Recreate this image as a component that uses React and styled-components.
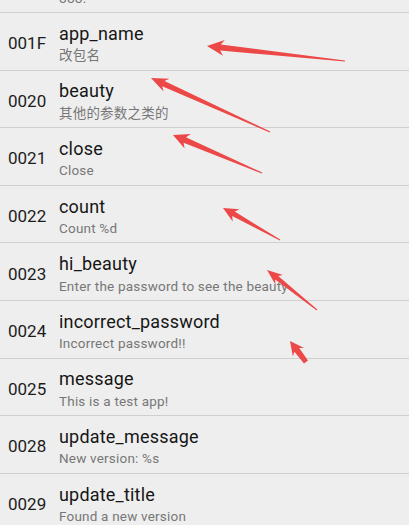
import React from 'react'
import styled, { createGlobalStyle } from 'styled-components'

const GlobalStyle = createGlobalStyle`
   html, body {
      margin: 0;
      padding: 0;
      background: #eeeeee;
      overflow: hidden;
   }
   body {
      font-family: Roboto, "Noto Sans CJK SC", sans-serif;
   }
`

const Screen = styled.div`
   position: relative;
   width: 409px;
   height: 525px;
   overflow: hidden;
   background: #eeeeee;
`

const List = styled.ul`
   list-style: none;
   margin: -44.6px 0 0 0;
   padding: 0;
`

const Row = styled.li`
   box-sizing: border-box;
   height: 57.6px;
   display: flex;
   align-items: flex-start;
   padding-left: 8px;
   border-bottom: 1px solid #cfcfcf;
`

const Code = styled.span`
   width: 51px;
   flex-shrink: 0;
   padding-top: 20.2px;
   font-size: 17px;
   line-height: 20px;
   color: #1c1c1c;
`

const Texts = styled.div`
   display: flex;
   flex-direction: column;
   min-width: 0;
   padding-top: 10.8px;
`

const Name = styled.span`
   font-size: 18px;
   line-height: 20px;
   letter-spacing: 0.2px;
   color: #161616;
`

const Value = styled.span`
   margin-top: 3.5px;
   font-size: 13.5px;
   line-height: 16px;
   letter-spacing: 0.2px;
   color: #777777;
   white-space: nowrap;
`

const Overlay = styled.svg`
   position: absolute;
   top: 0;
   left: 0;
   pointer-events: none;
`

const rows = [
   ['001E', 'app', 'ooo.'],
   ['001F', 'app_name', '改包名'],
   ['0020', 'beauty', '其他的参数之类的'],
   ['0021', 'close', 'Close'],
   ['0022', 'count', 'Count %d'],
   ['0023', 'hi_beauty', 'Enter the password to see the beauty'],
   ['0024', 'incorrect_password', 'Incorrect password!!'],
   ['0025', 'message', 'This is a test app!'],
   ['0028', 'update_message', 'New version: %s'],
   ['0029', 'update_title', 'Found a new version'],
]

// tail, tip, head length, head half width, neck half width, tail half width
const arrows = [
   [[345, 61], [207, 46], 17, 8, 3, 0.5],
   [[270, 132], [151, 78], 17, 7, 2.8, 0.5],
   [[262, 173], [173, 135], 16, 8, 3, 0.5],
   [[280, 240], [223, 208], 15, 7, 2.6, 0.5],
   [[317, 310], [267, 270], 15.5, 6, 2.4, 0.5],
   [[306, 362], [290, 341], 14, 7, 3, 2.5],
]

const arrowPoints = ([tx, ty], [hx, hy], headLen, headHalf, neckHalf, tailHalf) => {
   const dx = hx - tx
   const dy = hy - ty
   const len = Math.hypot(dx, dy)
   const ux = dx / len
   const uy = dy / len
   const nx = -uy
   const ny = ux
   const bx = hx - ux * headLen
   const by = hy - uy * headLen
   const kx = hx - ux * headLen * 0.8
   const ky = hy - uy * headLen * 0.8
   const pts = [
      [hx, hy],
      [bx + nx * headHalf, by + ny * headHalf],
      [kx + nx * neckHalf, ky + ny * neckHalf],
      [tx + nx * tailHalf, ty + ny * tailHalf],
      [tx - nx * tailHalf, ty - ny * tailHalf],
      [kx - nx * neckHalf, ky - ny * neckHalf],
      [bx - nx * headHalf, by - ny * headHalf],
   ]
   return pts.map(p => p.map(v => v.toFixed(1)).join(',')).join(' ')
}

const App = () => {
   return (
      <Screen>
         <GlobalStyle />
         <List>
            {rows.map(([code, name, value]) => (
               <Row key={code}>
                  <Code>{code}</Code>
                  <Texts>
                     <Name>{name}</Name>
                     <Value>{value}</Value>
                  </Texts>
               </Row>
            ))}
         </List>
         <Overlay width="409" height="525" viewBox="0 0 409 525">
            {arrows.map((a, i) => (
               <polygon key={i} points={arrowPoints(...a)} fill="#ec4848" />
            ))}
         </Overlay>
      </Screen>
   )
}

export default App
